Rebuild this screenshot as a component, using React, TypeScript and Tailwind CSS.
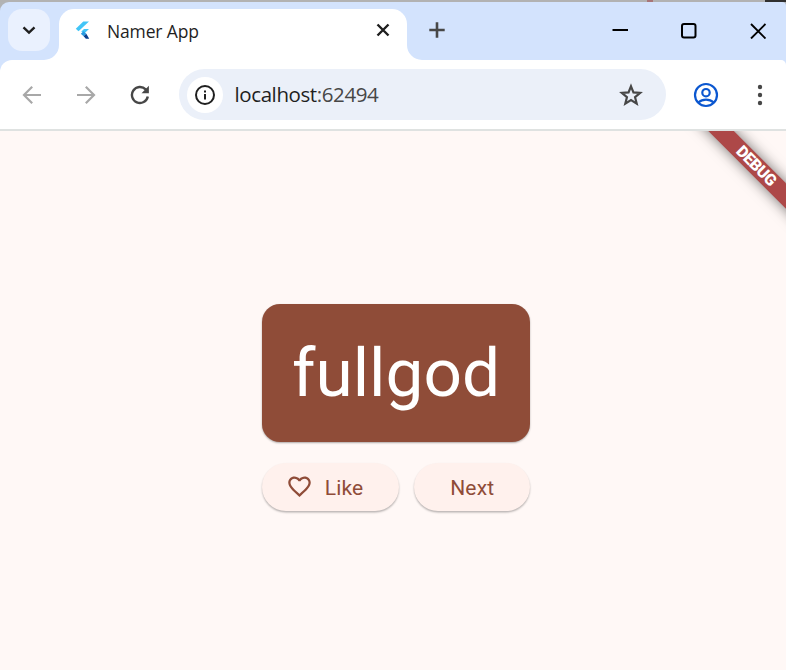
import React from "react";

function TabStrip() {
  return (
    <div className="relative flex h-[58px] rounded-tl-[9px] rounded-tr-[4px] bg-[#d3e3fd]">
      <button className="ml-2 mt-[7px] flex h-[42px] w-[42px] shrink-0 items-center justify-center rounded-[14px] bg-[#eaf1fe]">
        <svg width="14" height="10" viewBox="0 0 14 10" fill="none" stroke="#1f1f1f" strokeWidth="2.400">
          <path d="M1.500 2.400 7 7.600l5.500-5.200" />
        </svg>
      </button>
      <div className="relative ml-[9px] mt-[7px] flex h-[51px] w-[348px] shrink-0 items-start rounded-t-[15px] bg-white">
        <svg className="absolute bottom-0 -left-[15px]" width="15" height="15" fill="#fff">
          <path d="M15 0V15H0A15 15 0 0 0 15 0Z" />
        </svg>
        <svg className="absolute bottom-0 -right-[15px]" width="15" height="15" fill="#fff">
          <path d="M0 0V15H15A15 15 0 0 1 0 0Z" />
        </svg>
        <svg className="ml-[16px] mt-[12px] shrink-0" width="16" height="19" viewBox="0 0 16 19">
          <path d="M8.300 .5h5.700L3.500 10.300 .8 7.800Z" fill="#42c5f7" />
          <path d="M9 7.900h5L9 12.700 6.300 10.500Z" fill="#42c5f7" />
          <path d="M5.800 12.800 8.600 10.300 11.300 12.800 8.600 15.300Z" fill="#299be0" />
          <path d="M8.600 15.300 11.300 12.800l2.900 4.900H10.900Z" fill="#073e8e" />
        </svg>
        <span className="ml-[16px] mt-[10px] w-[100px] whitespace-nowrap font-['Open_Sans','Noto_Sans',sans-serif] text-[17.500px] leading-[25px] tracking-[-0.150px] text-[#1f1f1f]">
          Namer App
        </span>
        <svg className="ml-auto mr-[17px] mt-[14px]" width="14" height="14" viewBox="0 0 14 14" stroke="#1f1f1f" strokeWidth="2.400">
          <path d="m1.500 1.500 11 11M12.500 1.500l-11 11" />
        </svg>
      </div>
      <svg className="ml-[22px] mt-[20px] shrink-0" width="16" height="16" viewBox="0 0 16 16" stroke="#474747" strokeWidth="2.600">
        <path d="M8 .300v15.400M.300 8h15.400" />
      </svg>
      <div className="ml-auto mr-[20px] mt-[20px] flex items-start">
        <svg width="16" height="17" stroke="#000" strokeWidth="2">
          <path d="M.500 8h15.500" />
        </svg>
        <svg className="ml-[52px]" width="17" height="17" fill="none" stroke="#000" strokeWidth="2">
          <rect x="2" y="2" width="13.500" height="13.500" rx="2" />
        </svg>
        <svg className="ml-[53px]" width="16" height="17" stroke="#000" strokeWidth="1.900">
          <path d="M1 2l14.500 14.500M15.500 2 1 16.500" />
        </svg>
      </div>
    </div>
  );
}

function Toolbar() {
  return (
    <div className="bg-[#d3e3fd]">
      <div className="flex h-[71px] items-center rounded-tl-[12px] rounded-tr-[5px] border-b-2 border-[#dfe2e1] bg-white">
        <svg className="ml-[22px]" width="20" height="20" viewBox="0 0 20 20" fill="none" stroke="#a8a8a8" strokeWidth="2.200">
          <path d="M19 10H2.500M10.200 1.800 2 10l8.200 8.200" />
        </svg>
        <svg className="ml-[34px]" width="20" height="20" viewBox="0 0 20 20" fill="none" stroke="#a8a8a8" strokeWidth="2.200">
          <path d="M1 10h16.500M9.800 1.800 18 10l-8.200 8.200" />
        </svg>
        <svg className="ml-[34px]" width="20" height="20" viewBox="0 0 20 20" fill="none" stroke="#474747" strokeWidth="2.400">
          <path d="M17.800 11.500A8 8 0 1 1 15.700 4.400L17 5.700" />
          <path d="M18.900 .8V8.200H11.500Z" fill="#474747" stroke="none" />
        </svg>
        <div className="ml-[29px] flex h-[51px] w-[487px] items-center rounded-full bg-[#ebf0f9] pl-2 pr-[23px]">
          <div className="flex h-[36px] w-[36px] items-center justify-center rounded-full bg-white">
            <svg width="20" height="20" viewBox="0 0 20 20">
              <circle cx="10" cy="10" r="9" fill="none" stroke="#1f1f1f" strokeWidth="2" />
              <path d="M9 9h2v5.500H9zM9 5.500h2v2H9z" fill="#1f1f1f" />
            </svg>
          </div>
          <span className="ml-[11.500px] whitespace-nowrap pb-[2px] font-['Open_Sans','Noto_Sans',sans-serif] text-[20.500px] leading-[28px] tracking-[-0.400px] text-[#1f1f1f]">
            localhost<span className="text-[#474747]">:62494</span>
          </span>
          <svg className="ml-auto" width="24" height="24" viewBox="0 0 24 24" fill="none" stroke="#474747" strokeWidth="2.200">
            <path d="m12 3.300 2.450 6.100 6.700.500-5.100 4.300 1.650 6.400L12 17.100 6.300 20.600l1.650-6.400L2.850 9.900l6.700-.500Z" />
          </svg>
        </div>
        <svg className="ml-[27px]" width="26" height="26" viewBox="0 0 26 26" fill="none" stroke="#0b57d0" strokeWidth="2.200">
          <circle cx="13" cy="13" r="11" />
          <circle cx="13" cy="10.700" r="3.700" />
          <path d="M5.300 20.500a11.500 11.500 0 0 1 15.400 0" />
        </svg>
        <svg className="ml-[38px]" width="6" height="22" fill="#474747">
          <circle cx="3" cy="3" r="2.200" />
          <circle cx="3" cy="11" r="2.200" />
          <circle cx="3" cy="19" r="2.200" />
        </svg>
      </div>
    </div>
  );
}

export default function App() {
  return (
    <div className="flex h-[670px] w-[786px] flex-col overflow-hidden bg-[#b1b3b5] font-[Roboto,sans-serif]">
      <div className="flex h-[2px] shrink-0 justify-end bg-[#b2b2b2]">
        <div className="mr-[112px] w-[6px] bg-[#a87578]" />
        <div className="w-[21px] bg-[#303030]" />
      </div>
      <TabStrip />
      <Toolbar />
      <main className="relative flex flex-1 flex-col items-center overflow-hidden bg-[#fff8f6]">
        <div className="absolute left-[656px] top-[26.300px] flex h-[18.300px] w-[200px] rotate-45 items-center justify-center bg-[#ad4848] shadow-[0_0_14px_rgba(0,0,0,0.550)]">
          <span className="text-[16px] font-black leading-none tracking-[-0.500px] text-white">DEBUG</span>
        </div>
        <div className="ml-[6px] mt-[173.400px] flex h-[138px] w-[268px] items-center justify-center rounded-[18px] bg-[#8f4c38] pb-[1px] shadow-[0_1px_2px_rgba(0,0,0,0.320)]">
          <span className="text-[67.500px] leading-[78px] text-white">fullgod</span>
        </div>
        <div className="ml-[6px] mt-[20.600px] flex gap-[15px] text-[21px] leading-6 tracking-[0.150px] text-[#8f4c38]">
          <button className="flex h-[48px] w-[137.500px] items-center rounded-full bg-[#fff1ed] pl-[24px] shadow-[0_1.500px_2px_rgba(0,0,0,0.280)]">
            <svg width="27" height="27" viewBox="0 0 24 24" fill="#8f4c38">
              <path d="M16.500 3c-1.740 0-3.410.810-4.500 2.090C10.910 3.810 9.240 3 7.500 3 4.420 3 2 5.420 2 8.500c0 3.780 3.400 6.860 8.550 11.540L12 21.350l1.450-1.320C18.600 15.360 22 12.280 22 8.500 22 5.420 19.580 3 16.500 3zm-4.400 15.550-.100.100-.100-.100C7.140 14.240 4 11.390 4 8.500 4 6.500 5.500 5 7.500 5c1.540 0 3.040.990 3.570 2.360h1.870C13.460 5.990 14.960 5 16.500 5c2 0 3.500 1.500 3.500 3.500 0 2.890-3.140 5.740-7.900 10.050z" />
            </svg>
            <span className="ml-[12px] pt-[2px]">Like</span>
          </button>
          <button className="flex h-[48px] w-[116px] items-center justify-center rounded-full bg-[#fff1ed] pt-[2px] shadow-[0_1.500px_2px_rgba(0,0,0,0.280)]">
            Next
          </button>
        </div>
      </main>
    </div>
  );
}
